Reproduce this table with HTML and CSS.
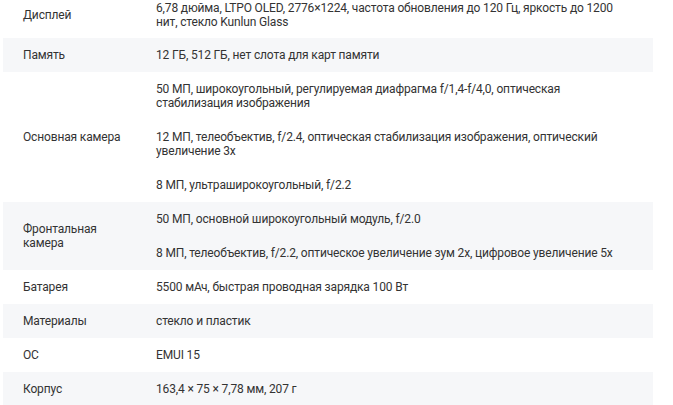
FILE: index.html
```html
<!DOCTYPE html>
<html lang="ru">
<head>
<meta charset="utf-8">
<link rel="stylesheet" href="styles.css">
</head>
<body>
<div class="specs">
  <div class="row">
    <div class="label">Дисплей</div>
    <div class="value"><div class="item">6,78 дюйма, LTPO OLED, 2776×1224, частота обновления до 120 Гц, яркость до 1200 нит, стекло Kunlun Glass</div></div>
  </div>
  <div class="row alt">
    <div class="label">Память</div>
    <div class="value"><div class="item">12 ГБ, 512 ГБ, нет слота для карт памяти</div></div>
  </div>
  <div class="row">
    <div class="label">Основная камера</div>
    <div class="value">
      <div class="item">50 МП, широкоугольный, регулируемая диафрагма f/1,4-f/4,0, оптическая стабилизация изображения</div>
      <div class="item">12 МП, телеобъектив, f/2.4, оптическая стабилизация изображения, оптический увеличение 3x</div>
      <div class="item">8 МП, ультраширокоугольный, f/2.2</div>
    </div>
  </div>
  <div class="row alt">
    <div class="label">Фронтальная камера</div>
    <div class="value">
      <div class="item">50 МП, основной широкоугольный модуль, f/2.0</div>
      <div class="item">8 МП, телеобъектив, f/2.2, оптическое увеличение зум 2x, цифровое увеличение 5x</div>
    </div>
  </div>
  <div class="row">
    <div class="label">Батарея</div>
    <div class="value"><div class="item">5500 мАч, быстрая проводная зарядка 100 Вт</div></div>
  </div>
  <div class="row alt">
    <div class="label">Материалы</div>
    <div class="value"><div class="item">стекло и пластик</div></div>
  </div>
  <div class="row">
    <div class="label">ОС</div>
    <div class="value"><div class="item">EMUI 15</div></div>
  </div>
  <div class="row alt">
    <div class="label">Корпус</div>
    <div class="value"><div class="item">163,4 × 75 × 7,78 мм, 207 г</div></div>
  </div>
</div>
</body>
</html>
```

FILE: styles.css
```css
html, body {
  margin: 0;
  padding: 0;
  background: #fff;
}
body {
  font-family: Roboto, "Noto Sans", sans-serif;
  font-size: 12px;
  line-height: 14px;
  letter-spacing: -0.15px;
  color: #333;
  overflow: hidden;
}
.specs {
  width: 650px;
  margin: -9px 0 0 3px;
}
.row {
  display: grid;
  grid-template-columns: 133px 1fr;
  align-items: center;
}
.row.alt {
  background: #f6f7f9;
}
.label {
  padding: 10px 8px 10px 20px;
}
.value {
  padding: 0 20px;
}
.item {
  padding: 10px 0;
}
.row:first-child .value {
  padding-bottom: 0;
}
.row:first-child .item {
  padding-bottom: 9px;
}
```
